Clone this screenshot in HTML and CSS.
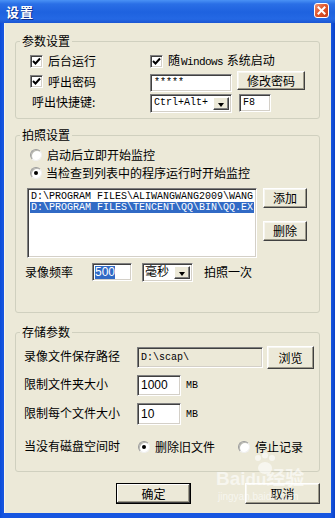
FILE: index.html
```html
<!DOCTYPE html>
<html lang="zh-CN">

<head>
  <meta charset="UTF-8">
  <title>设置</title>
  <link rel="stylesheet" href="styles.css">
</head>

<body>

  <div class="win">
    <!-- Barra de titulo -->
    <div class="win-title">
      <span class="win-title-text">设置</span>
      <svg class="win-close" width="15" height="15" viewBox="0 0 15 15">
        <defs>
          <linearGradient id="cg" x1="0" y1="0" x2="1" y2="1">
            <stop offset="0" stop-color="#f09a7c" />
            <stop offset="0.45" stop-color="#e1572d" />
            <stop offset="1" stop-color="#c23a15" />
          </linearGradient>
        </defs>
        <rect x="0.5" y="0.5" width="14" height="14" rx="2.5" fill="url(#cg)" stroke="#fff" />
        <path d="M4.5 4.5 L10.5 10.5 M10.5 4.5 L4.5 10.5" stroke="#fff" stroke-width="2" stroke-linecap="square" />
      </svg>
    </div>

    <div class="win-body">

      <!-- 参数设置 -->
      <fieldset class="grp grp-params">
        <legend>参数设置</legend>
        <div class="grp-body">
          <div class="row row-p1">
            <label class="chk cell-a"><span class="box"><svg width="9" height="9" viewBox="0 0 9 9"><path d="M1 4 L3.5 6.5 L8 1.5" fill="none" stroke="#000" stroke-width="2" /></svg></span><span>后台运行</span></label>
            <label class="chk"><span class="box"><svg width="9" height="9" viewBox="0 0 9 9"><path d="M1 4 L3.5 6.5 L8 1.5" fill="none" stroke="#000" stroke-width="2" /></svg></span><span>随<span class="mono">Windows</span>&nbsp;系统启动</span></label>
          </div>
          <div class="row row-p2">
            <label class="chk cell-a"><span class="box"><svg width="9" height="9" viewBox="0 0 9 9"><path d="M1 4 L3.5 6.5 L8 1.5" fill="none" stroke="#000" stroke-width="2" /></svg></span><span>呼出密码</span></label>
            <div class="field field-pwd mono">*****</div>
            <div class="btn btn-pwd">修改密码</div>
          </div>
          <div class="row row-p3">
            <span class="cell-a txt-key">呼出快捷键:</span>
            <div class="field combo combo-key"><span class="mono">Ctrl+Alt+</span><span class="combo-btn"></span></div>
            <div class="field field-f8 mono">F8</div>
          </div>
        </div>
      </fieldset>

      <!-- 拍照设置 -->
      <fieldset class="grp grp-shot">
        <legend>拍照设置</legend>
        <div class="grp-body">
          <label class="radio row-r1"><span class="dot"></span><span>启动后立即开始监控</span></label>
          <label class="radio row-r2"><span class="dot on"></span><span>当检查到列表中的程序运行时开始监控</span></label>
          <div class="list-area">
            <div class="listbox">
              <div class="list-item">D:\PROGRAM FILES\ALIWANGWANG2009\WANG</div>
              <div class="list-item sel">D:\PROGRAM FILES\TENCENT\QQ\BIN\QQ.EX</div>
            </div>
            <div class="list-btns">
              <div class="btn btn-side">添加</div>
              <div class="btn btn-side btn-del">删除</div>
            </div>
          </div>
          <div class="row row-freq">
            <span class="txt-freq">录像频率</span>
            <div class="field field-freq"><span class="hl">500</span></div>
            <div class="field combo combo-unit"><span>毫秒</span><span class="combo-btn"></span></div>
            <span class="txt-once">拍照一次</span>
          </div>
        </div>
      </fieldset>

      <!-- 存储参数 -->
      <fieldset class="grp grp-store">
        <legend>存储参数</legend>
        <div class="grp-body">
          <div class="row row-s1">
            <span class="cell-s">录像文件保存路径</span>
            <div class="field field-path mono">D:\scap\</div>
            <div class="btn btn-browse">浏览</div>
          </div>
          <div class="row row-s2">
            <span class="cell-s">限制文件夹大小</span>
            <div class="field field-size">1000</div>
            <span class="unit mono">MB</span>
          </div>
          <div class="row row-s3">
            <span class="cell-s">限制每个文件大小</span>
            <div class="field field-size field-size2">10</div>
            <span class="unit mono">MB</span>
          </div>
          <div class="row row-s4">
            <span class="cell-s cell-s4">当没有磁盘空间时</span>
            <label class="radio opt-del"><span class="dot on"></span><span>删除旧文件</span></label>
            <label class="radio"><span class="dot"></span><span>停止记录</span></label>
          </div>
        </div>
      </fieldset>

      <div class="actions">
        <div class="btn btn-main btn-default">确定</div>
        <div class="btn btn-main">取消</div>
      </div>
    </div>

    <!-- marca de agua -->
    <div class="wm">
      <svg class="wm-paw" width="26" height="24" viewBox="0 0 26 24">
        <circle cx="6" cy="6" r="3" fill="#fff" />
        <circle cx="13" cy="3.5" r="3" fill="#fff" />
        <circle cx="20" cy="6" r="3" fill="#fff" />
        <ellipse cx="13" cy="16" rx="7" ry="6" fill="#fff" />
      </svg>
      <div class="wm-main">Bai<span class="wm-du">du</span>经验</div>
      <div class="wm-url">jingyan.baidu.com</div>
    </div>
  </div>

</body>

</html>
```

FILE: styles.css
```css
* {
  box-sizing: border-box;
}

body {
  margin: 0;
  width: 335px;
  height: 518px;
  font-family: "Noto Sans CJK SC", sans-serif;
  font-size: 12px;
  line-height: 14px;
  color: #000;
  background: #0a3fd0;
  overflow: hidden;
}

.mono {
  font-family: "Liberation Mono", "Noto Sans CJK SC", monospace;
  font-size: 10px;
}

/* Ventana */
.win {
  position: relative;
  width: 335px;
  height: 518px;
  display: flex;
  flex-direction: column;
  background: linear-gradient(90deg, #0b4cd8 0, #1655e0 3px, #1655e0 331px, #0a40c8 335px);
}

.win-title {
  height: 23px;
  display: flex;
  align-items: center;
  justify-content: space-between;
  padding: 0 6px 0 6px;
  background: linear-gradient(180deg, #4a92f5 0, #2a6fe6 4px, #1e62df 12px, #2468e4 19px, #1a55d2 23px);
}

.win-title-text {
  color: #fff;
  font-weight: bold;
  font-size: 13px;
  letter-spacing: 1px;
  text-shadow: 1px 1px 0 #0b2f8f;
}

.win-close {
  display: block;
  margin-top: -3px;
}

.win-body {
  flex: 1;
  margin: 0 4px 5px 4px;
  background: #ece9d8;
  padding: 11px 11px 0 11px;
  box-shadow: inset 1px 0 #f6f4ea;
}

/* Grupos */
.grp {
  margin: 0;
  padding: 0;
  border: 1px solid #d0d0bf;
  border-radius: 3px;
  min-width: 0;
}

.grp legend {
  margin-left: 4px;
  padding: 0 2px;
  line-height: 14px;
  font-size: 12px;
}

.grp-shot {
  margin-top: 9px;
}

.grp-store {
  margin-top: 12px;
}

.row {
  display: flex;
  align-items: center;
}

/* 参数设置 */
.grp-params .grp-body {
  padding: 3px 0 4px 14px;
}

.row-p1 {
  height: 20px;
}

.row-p2 {
  height: 21px;
}

.row-p3 {
  height: 22px;
}

.cell-a {
  width: 120px;
  flex: none;
}

.txt-key {
  padding-left: 2px;
  margin-top: -3px;
}

.chk {
  display: flex;
  align-items: center;
}

.chk .mono {
  font-size: 11px;
  letter-spacing: -0.6px;
  margin: 0 1px;
}

.box {
  width: 13px;
  height: 13px;
  margin-right: 5px;
  background: #fff;
  border: 1px solid;
  border-color: #808080 #fff #fff #808080;
  box-shadow: inset 1px 1px #404040, inset -1px -1px #d4d0c8;
  display: flex;
  align-items: center;
  justify-content: center;
  flex: none;
}

.box svg {
  display: block;
}

/* Campos */
.field {
  height: 18px;
  background: #fff;
  border: 1px solid;
  border-color: #808080 #fff #fff #808080;
  box-shadow: inset 1px 1px #404040, inset -1px -1px #d4d0c8;
  padding: 0 3px;
  display: flex;
  align-items: center;
  flex: none;
  font-family: "Liberation Sans", "Noto Sans CJK SC", sans-serif;
  font-size: 12px;
}

.field.mono {
  font-family: "Liberation Mono", monospace;
  font-size: 10px;
}

.field-pwd {
  width: 82px;
  font-size: 11px;
  margin-top: 2px;
}

.combo {
  position: relative;
  height: 19px;
  padding-right: 2px;
}

.combo .mono {
  font-size: 10px;
}

.combo-btn {
  position: absolute;
  right: 2px;
  top: 2px;
  bottom: 2px;
  width: 16px;
  background: #ece9d8;
  border: 1px solid;
  border-color: #fff #404040 #404040 #fff;
  box-shadow: inset -1px -1px #808080;
}

.combo-btn::after {
  content: "";
  position: absolute;
  left: 4px;
  top: 5px;
  border-left: 3.5px solid transparent;
  border-right: 3.5px solid transparent;
  border-top: 4px solid #000;
}

.combo-key {
  width: 82px;
}

.field-f8 {
  width: 32px;
  margin-left: 7px;
  font-size: 11px;
}

/* Botones */
.btn {
  background: #ece9d8;
  border: 1px solid;
  border-color: #fff #404040 #404040 #fff;
  box-shadow: inset -1px -1px #9d9a8a, inset 1px 1px #f7f6f0;
  display: flex;
  align-items: center;
  justify-content: center;
  flex: none;
  font-size: 12px;
}

.btn-pwd {
  width: 68px;
  height: 19px;
  margin-left: 5px;
  margin-top: -2px;
}

/* 拍照设置 */
.grp-shot .grp-body {
  padding: 3px 0 30px 11px;
}

.radio {
  display: flex;
  align-items: center;
}

.row-r1 {
  height: 19px;
  padding-left: 3px;
}

.row-r2 {
  height: 18px;
  padding-left: 3px;
}

.row-r2 .dot {
  margin-right: 4px;
}

.dot {
  width: 12px;
  height: 12px;
  margin-right: 5px;
  border-radius: 50%;
  background: #fff;
  border: 1px solid;
  border-color: #9a9a9a #f0f0f0 #f0f0f0 #9a9a9a;
  box-shadow: inset 1px 1px #b8b8b0;
  position: relative;
  flex: none;
}

.dot.on::after {
  content: "";
  position: absolute;
  left: 3px;
  top: 3px;
  width: 4px;
  height: 4px;
  border-radius: 50%;
  background: #000;
}

.list-area {
  display: flex;
  margin-top: 6px;
}

.listbox {
  width: 230px;
  height: 70px;
  background: #fff;
  border: 1px solid;
  border-color: #808080 #fff #fff #808080;
  box-shadow: inset 1px 1px #404040, inset -1px -1px #d4d0c8;
  padding: 2px 2px;
  overflow: hidden;
}

.list-item {
  height: 11px;
  line-height: 11px;
  padding-left: 1px;
  white-space: nowrap;
  overflow: hidden;
  font-family: "Liberation Mono", monospace;
  font-size: 10px;
}

.list-item.sel {
  background: #316ac5;
  color: #fff;
}

.list-btns {
  margin-left: 6px;
  display: flex;
  flex-direction: column;
}

.btn-side {
  width: 44px;
  height: 20px;
}

.btn-del {
  margin-top: 13px;
}

.row-freq {
  height: 20px;
  margin-top: 4px;
}

.txt-freq {
  width: 65px;
  margin-left: -2px;
  padding-right: 2px;
  flex: none;
}

.field-freq {
  width: 40px;
  margin-left: 2px;
  padding: 0 2px;
}

.hl {
  background: #316ac5;
  color: #fff;
  line-height: 13px;
}

.combo-unit {
  width: 51px;
  margin-left: 10px;
  padding-left: 2px;
}

.txt-once {
  margin-left: 11px;
}

/* 存储参数 */
.grp-store .grp-body {
  padding: 6px 0 13px 8px;
}

.row-s1 {
  height: 24px;
}

.row-s2 {
  height: 24px;
  margin-top: 4px;
}

.row-s3 {
  height: 24px;
  margin-top: 5px;
}

.row-s4 {
  height: 22px;
  margin-top: 10px;
}

.cell-s {
  width: 113px;
  flex: none;
  margin-top: -3px;
}

.cell-s4 {
  width: 114px;
}

.field-path {
  width: 126px;
  height: 21px;
  background: #ece9d8;
  margin-top: 1px;
}

.btn-browse {
  width: 47px;
  height: 23px;
  margin-left: 4px;
  margin-top: 1px;
}

.field-size {
  width: 44px;
  height: 21px;
}

.field-size2 {
  height: 22px;
}

.unit {
  margin-left: 5px;
  margin-top: 2px;
  font-size: 10px;
}

.opt-del {
  width: 100px;
  flex: none;
}

/* Botones inferiores */
.actions {
  display: flex;
  justify-content: flex-end;
  gap: 54px;
  margin-top: 11px;
}

.btn-main {
  width: 75px;
  height: 21px;
}

.btn-default {
  border-color: #000;
  box-shadow: inset -1px -1px #404040, inset 1px 1px #fff, inset -2px -2px #9d9a8a;
}

/* Marca de agua */
.wm {
  position: absolute;
  left: 216px;
  top: 452px;
  width: 100px;
  color: #fff;
  opacity: 0.6;
  pointer-events: none;
}

.wm-paw {
  display: block;
  margin-left: 36px;
}

.wm-main {
  font-family: "Liberation Sans", "Noto Sans CJK SC", sans-serif;
  font-size: 19px;
  font-weight: bold;
  line-height: 18px;
  margin-top: -6px;
}

.wm-du {
  font-size: 17px;
}

.wm-url {
  font-family: "Liberation Sans", sans-serif;
  font-size: 10px;
  line-height: 12px;
  margin-top: 2px;
  margin-left: 2px;
}
```
